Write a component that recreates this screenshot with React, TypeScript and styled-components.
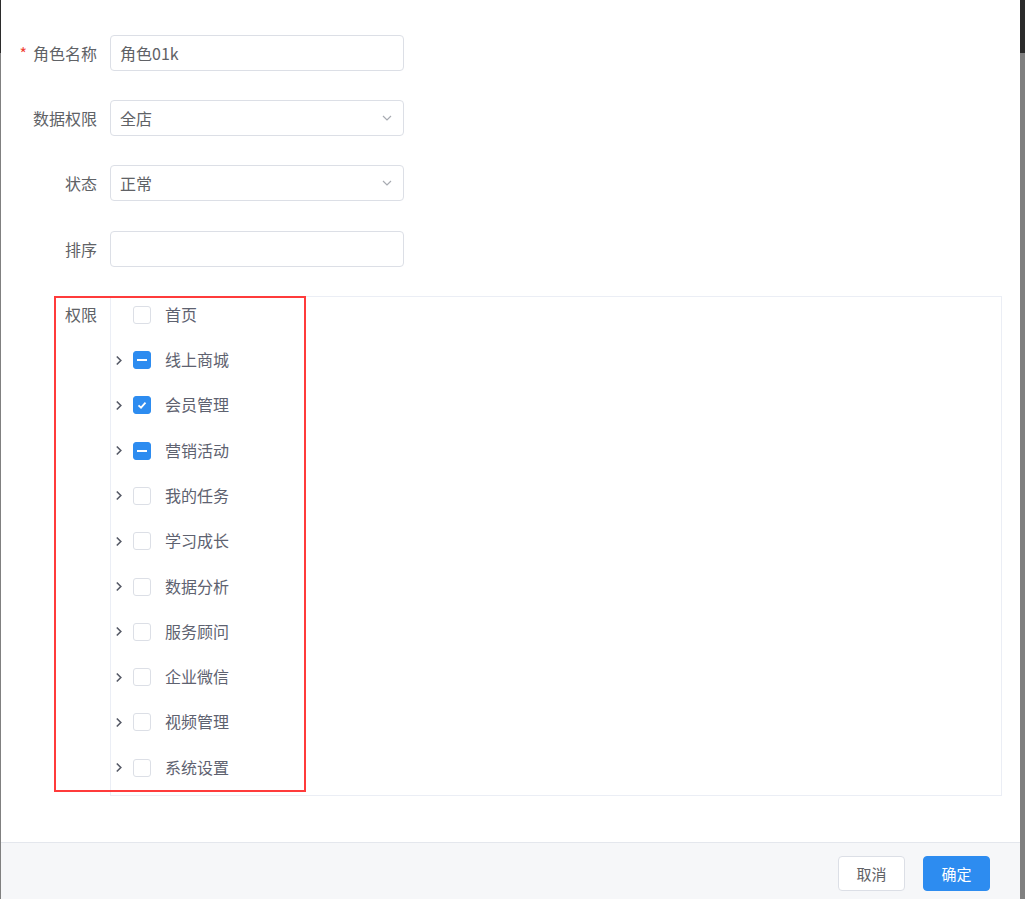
import React from 'react';
import styled, { createGlobalStyle } from 'styled-components';

const GlobalStyle = createGlobalStyle`
  html, body {
    margin: 0;
    padding: 0;
    overflow: hidden;
  }
  body {
    background: linear-gradient(#2b2b2b 0, #2b2b2b 53px, #808080 53px);
    font-family: 'Noto Sans CJK SC', 'Noto Sans', sans-serif;
    color: #606266;
  }
`;

const Dialog = styled.div`
  margin: 0 5px 0 1px;
  height: 899px;
  background: #fff;
  display: flex;
  flex-direction: column;
`;

const Body = styled.div`
  flex: 1;
  padding: 35px 0 0 0;
`;

const Form = styled.div`
  display: grid;
  grid-template-columns: 96px 1fr;
  column-gap: 13px;
  row-gap: 29.2px;
  padding-right: 18px;
`;

const Label = styled.div<{ $required?: boolean }>`
  text-align: right;
  font-size: 16px;
  line-height: 36px;
  height: 36px;
  color: #606266;
  white-space: nowrap;

  &::before {
    content: ${(p) => (p.$required ? "'*'" : "''")};
    color: #f04134;
    margin-right: 6px;
  }
`;

const Input = styled.div<{ $width?: number }>`
  width: ${(p) => p.$width ?? 294}px;
  height: 36px;
  box-sizing: border-box;
  border: 1px solid #dcdfe6;
  border-radius: 4px;
  padding: 0 10px 0 9px;
  display: flex;
  align-items: center;
  justify-content: space-between;
  font-size: 16px;
  color: #606266;
`;

const PermCell = styled.div`
  position: relative;
`;

const Tree = styled.div`
  border: 1px solid #ebeef5;
  height: 500px;
  box-sizing: border-box;
`;

const TreeRow = styled.div`
  height: 45.3px;
  box-sizing: border-box;
  padding-top: 9px;
  display: flex;
  align-items: flex-start;
`;

const Expander = styled.span`
  width: 16px;
  height: 18px;
  margin-right: 6px;
  display: flex;
  align-items: center;
  justify-content: center;
`;

const Box = styled.span<{ $state: 'none' | 'half' | 'all' }>`
  width: 18px;
  height: 18px;
  box-sizing: border-box;
  border-radius: 3px;
  border: 1px solid ${(p) => (p.$state === 'none' ? '#dcdfe6' : '#2d8cf0')};
  background: ${(p) => (p.$state === 'none' ? '#fff' : '#2d8cf0')};
  display: flex;
  align-items: center;
  justify-content: center;
  margin-right: 14px;
`;

const NodeText = styled.span`
  font-size: 16px;
  line-height: 18px;
  margin-top: -1px;
  color: #5e6270;
`;

const Highlight = styled.div`
  position: absolute;
  left: -56px;
  top: 0;
  width: 252px;
  height: 496px;
  border: 2px solid #ff3b3b;
  box-sizing: border-box;
  pointer-events: none;
`;

const Footer = styled.div`
  height: 57px;
  box-sizing: border-box;
  border-top: 1px solid #e4e7ed;
  background: #f6f7f9;
  display: flex;
  justify-content: flex-end;
  align-items: flex-start;
  gap: 18px;
  padding: 13px 30px 0 0;
`;

const Button = styled.button<{ $primary?: boolean }>`
  width: 67px;
  height: 35px;
  border-radius: 4px;
  font-family: inherit;
  font-size: 15px;
  border: 1px solid ${(p) => (p.$primary ? '#2d8cf0' : '#dcdfe6')};
  background: ${(p) => (p.$primary ? '#2d8cf0' : '#fff')};
  color: ${(p) => (p.$primary ? '#fff' : '#606266')};
  padding: 0;
`;

const Caret = () => (
  <svg width="12" height="12" viewBox="0 0 12 12">
    <polyline points="2,4 6,8 10,4" fill="none" stroke="#a8abb2" strokeWidth="1.2" />
  </svg>
);

const Arrow = () => (
  <svg width="8" height="11" viewBox="0 0 8 11">
    <polyline points="1.8,1.5 5.8,5.5 1.8,9.5" fill="none" stroke="#565a66" strokeWidth="1.6" />
  </svg>
);

const Check = () => (
  <svg width="12" height="12" viewBox="0 0 12 12">
    <polyline points="2.5,6.3 5,8.6 9.5,3.6" fill="none" stroke="#fff" strokeWidth="1.8" />
  </svg>
);

const Dash = () => <svg width="10" height="2" viewBox="0 0 10 2"><rect width="10" height="2" fill="#fff" /></svg>;

type Node = { name: string; children: boolean; state: 'none' | 'half' | 'all' };

const nodes: Node[] = [
  { name: '首页', children: false, state: 'none' },
  { name: '线上商城', children: true, state: 'half' },
  { name: '会员管理', children: true, state: 'all' },
  { name: '营销活动', children: true, state: 'half' },
  { name: '我的任务', children: true, state: 'none' },
  { name: '学习成长', children: true, state: 'none' },
  { name: '数据分析', children: true, state: 'none' },
  { name: '服务顾问', children: true, state: 'none' },
  { name: '企业微信', children: true, state: 'none' },
  { name: '视频管理', children: true, state: 'none' },
  { name: '系统设置', children: true, state: 'none' },
];

export default function App() {
  return (
    <>
      <GlobalStyle />
      <Dialog>
        <Body>
          <Form>
            <Label $required>角色名称</Label>
            <Input>角色01k</Input>

            <Label>数据权限</Label>
            <Input>
              全店
              <Caret />
            </Input>

            <Label>状态</Label>
            <Input>
              正常
              <Caret />
            </Input>

            <Label>排序</Label>
            <Input />

            <Label>权限</Label>
            <PermCell>
              <Tree>
                {nodes.map((n) => (
                  <TreeRow key={n.name}>
                    <Expander>{n.children && <Arrow />}</Expander>
                    <Box $state={n.state}>
                      {n.state === 'all' && <Check />}
                      {n.state === 'half' && <Dash />}
                    </Box>
                    <NodeText>{n.name}</NodeText>
                  </TreeRow>
                ))}
              </Tree>
              <Highlight />
            </PermCell>
          </Form>
        </Body>
        <Footer>
          <Button>取消</Button>
          <Button $primary>确定</Button>
        </Footer>
      </Dialog>
    </>
  );
}
